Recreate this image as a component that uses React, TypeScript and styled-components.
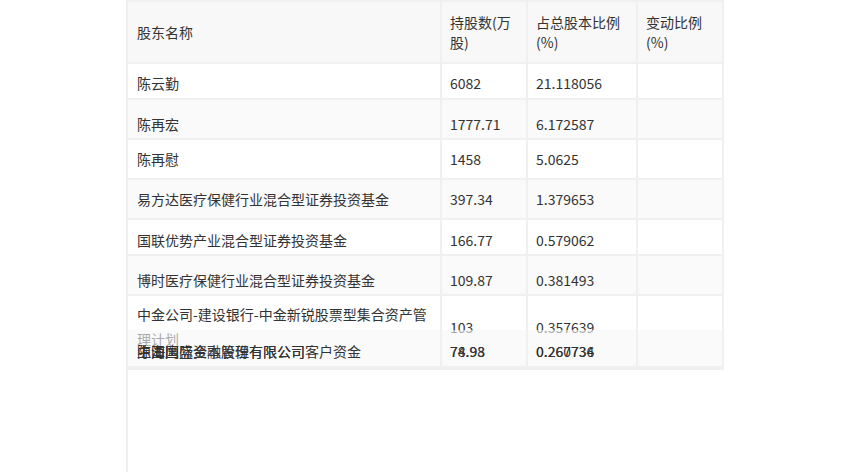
import React from "react";
import styled, { createGlobalStyle } from "styled-components";

const Global = createGlobalStyle`
  html, body { margin: 0; padding: 0; background: #ffffff; }
  body {
    font-family: "Noto Sans CJK SC", "Noto Sans", sans-serif;
    color: #333333;
    font-size: 14px;
  }
`;

const Frame = styled.div`
  margin-left: 126px;
  width: 598px;
  height: 472px;
  border-left: 2px solid #f0f0f0;
  box-sizing: border-box;
  overflow: hidden;
`;

const Table = styled.div`
  display: flex;
  flex-direction: column;
  gap: 2px;
  background: #f0f0f0;
  padding: 2px 2px 4px 0;
`;

const Row = styled.div<{ $h: number; $bg: string; $overlay?: boolean; $pt?: number; $pb?: number }>`
  display: grid;
  grid-template-columns: 312px 84px 108px 84px;
  column-gap: 2px;
  height: ${(p) => p.$h}px;
  margin-top: ${(p) => (p.$overlay ? "-38px" : "0")};
  position: relative;
  z-index: ${(p) => (p.$overlay ? 1 : 0)};
  & > div {
    background: ${(p) => p.$bg};
    padding-top: ${(p) => p.$pt ?? 0}px;
    padding-bottom: ${(p) => p.$pb ?? 0}px;
  }
`;

const Cell = styled.div<{ $lh?: number }>`
  box-sizing: border-box;
  padding-left: 8px;
  padding-right: 8px;
  display: flex;
  align-items: center;
  line-height: ${(p) => p.$lh ?? 20}px;
  font-size: 14px;
  color: #333333;
  word-break: break-all;
  overflow: visible;
  &:first-child { padding-left: 9px; }
`;

const Stack = styled.div`
  display: grid;
  & > span { grid-area: 1 / 1; white-space: nowrap; }
`;

type R = { name: string; shares: string; pct: string; h: number; pt?: number };

const rows: R[] = [
  { name: "陈云勤", shares: "6082", pct: "21.118056", h: 34, pt: 4 },
  { name: "陈再宏", shares: "1777.71", pct: "6.172587", h: 38, pt: 10 },
  { name: "陈再慰", shares: "1458", pct: "5.0625", h: 38 },
  { name: "易方达医疗保健行业混合型证券投资基金", shares: "397.34", pct: "1.379653", h: 38 },
  { name: "国联优势产业混合型证券投资基金", shares: "166.77", pct: "0.579062", h: 34, pt: 6 },
  { name: "博时医疗保健行业混合型证券投资基金", shares: "109.87", pct: "0.381493", h: 38, pt: 10 },
];

export default function App() {
  return (
    <>
      <Global />
      <Frame>
        <Table>
          <Row $h={60} $bg="#f8f8f8">
            <Cell>股东名称</Cell>
            <Cell>持股数(万股)</Cell>
            <Cell>占总股本比例(%)</Cell>
            <Cell>变动比例(%)</Cell>
          </Row>
          {rows.map((r, i) => (
            <Row key={r.name} $h={r.h} $bg={i % 2 === 0 ? "#ffffff" : "#fafafa"} $pt={r.pt}>
              <Cell>{r.name}</Cell>
              <Cell>{r.shares}</Cell>
              <Cell>{r.pct}</Cell>
              <Cell />
            </Row>
          ))}
          <Row $h={70} $bg="#ffffff" $pb={8}>
            <Cell $lh={25}>中金公司-建设银行-中金新锐股票型集合资产管理计划</Cell>
            <Cell>103</Cell>
            <Cell>0.357639</Cell>
            <Cell />
          </Row>
          <Row $h={36} $bg="rgba(246,246,246,0.6)" $overlay $pt={6}>
            <Cell>
              <Stack>
                <span>陈海鹰</span>
                <span>上海国盛资本管理有限公司</span>
                <span>中国国际金融股份有限公司客户资金</span>
              </Stack>
            </Cell>
            <Cell>
              <Stack>
                <span>74.98</span>
                <span>78.93</span>
              </Stack>
            </Cell>
            <Cell>
              <Stack>
                <span>0.260734</span>
                <span>0.267736</span>
              </Stack>
            </Cell>
            <Cell />
          </Row>
        </Table>
      </Frame>
    </>
  );
}
